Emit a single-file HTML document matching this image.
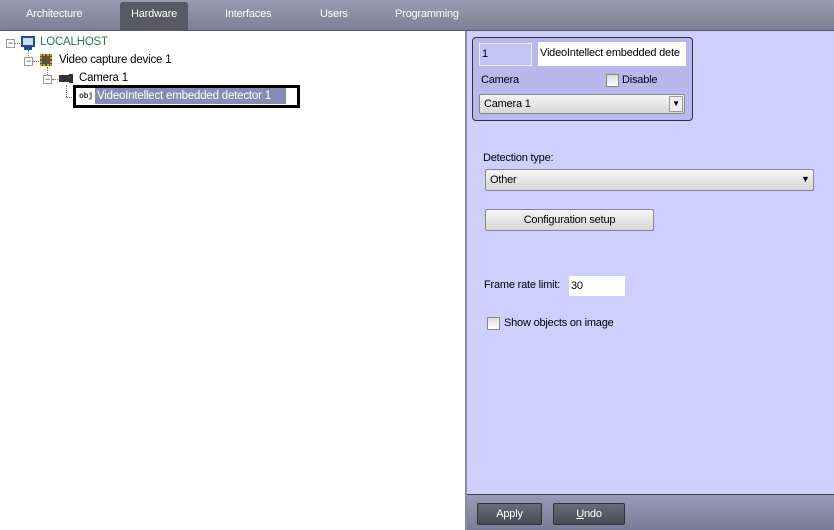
<!DOCTYPE html><html><head><style>
*{margin:0;padding:0;box-sizing:border-box}
body{width:834px;height:530px;position:relative;overflow:hidden;font-family:"Liberation Sans",sans-serif;font-size:11px;letter-spacing:-0.2px;background:#fff}
.a{position:absolute}
.top{left:0;top:0;width:834px;height:31px;background:linear-gradient(#9a9ab0,#7e7e96);border-bottom:1px solid #55556a}
.tab{top:8px;color:#fff;font-size:11px}
.left{left:0;top:31px;width:467px;height:499px;background:#fff;border-right:2px solid #8a8a9a}
.right{left:467px;top:31px;width:367px;height:463px;background:#cfcffd}
.bot{left:467px;top:494px;width:367px;height:36px;background:linear-gradient(#9a9ab8,#7c7c98);border-top:1px solid #444}
.btn{height:22px;background:linear-gradient(#f4f4f4,#d8d8d8);border:1px solid #888;border-radius:2px;text-align:center;line-height:20px}
.dbtn{top:8px;height:22px;background:linear-gradient(#6a6a78,#4a4a56);border:1px solid #333;border-radius:2px;color:#fff;text-align:center;line-height:20px}
.cb{width:13px;height:13px;background:linear-gradient(#ddd,#fff);border:1px solid #888}
.dot{border-left:1px dotted #777}
.doth{border-top:1px dotted #777}
.pm{width:9px;height:9px;border:1px solid #999;background:#fff;font-size:9px;line-height:6px;text-align:center;color:#333}
.tr{font-size:11.5px}
</style></head><body>
<div class="a top"></div>
<div class="a" style="left:120px;top:2px;width:68px;height:29px;background:#595966;border-radius:3px 3px 0 0"></div>
<div class="a tab" style="left:26px">Architecture</div>
<div class="a tab" style="left:131px">Hardware</div>
<div class="a tab" style="left:225px">Interfaces</div>
<div class="a tab" style="left:320px">Users</div>
<div class="a tab" style="left:395px">Programming</div>
<div class="a left"></div>
<div class="a pm" style="left:6px;top:39px">−</div>
<div class="a doth" style="left:15px;top:43px;width:5px"></div>
<div class="a" style="left:21px;top:36px;width:14px;height:11px;background:#cde;border:2px solid #2a4a8a"></div>
<div class="a" style="left:24px;top:47px;width:8px;height:3px;background:#2a4a8a"></div>
<div class="a tr" style="left:40px;top:36px;color:#2a7a4a">LOCALHOST</div>
<div class="a dot" style="left:28px;top:50px;height:8px"></div>
<div class="a pm" style="left:24px;top:57px">−</div>
<div class="a doth" style="left:33px;top:61px;width:6px"></div>
<div class="a" style="left:40px;top:54px;width:12px;height:12px;background:#554;border:2px dotted #d90"></div>
<div class="a tr" style="left:59px;top:54px;color:#000">Video capture device 1</div>
<div class="a dot" style="left:47px;top:67px;height:8px"></div>
<div class="a pm" style="left:43px;top:75px">−</div>
<div class="a doth" style="left:52px;top:79px;width:6px"></div>
<div class="a" style="left:59px;top:75px;width:10px;height:7px;background:#333"></div>
<div class="a" style="left:69px;top:74px;width:4px;height:9px;background:#333"></div>
<div class="a tr" style="left:79px;top:72px;color:#000">Camera 1</div>
<div class="a dot" style="left:66px;top:85px;height:12px"></div>
<div class="a doth" style="left:66px;top:97px;width:10px"></div>
<div class="a" style="left:73px;top:85px;width:227px;height:23px;border:3px solid #000"></div>
<div class="a" style="left:79px;top:92px;font-size:8px;color:#334;font-family:'Liberation Mono',monospace;font-weight:bold">obj</div>
<div class="a tr" style="left:95px;top:88px;width:191px;height:16px;background:#8a8ab4;color:#fff;padding-left:2px;line-height:16px;white-space:nowrap">VideoIntellect embedded detector 1</div>
<div class="a right"></div>
<div class="a" style="left:472px;top:37px;width:221px;height:84px;background:#b8b8ec;border:1px solid #333;border-radius:4px"></div>
<div class="a" style="left:479px;top:43px;width:53px;height:23px;border:1px solid #eef;background:#c4c4f4;padding:4px 2px">1</div>
<div class="a" style="left:538px;top:42px;width:148px;height:24px;background:#fff;padding:5px 2px;white-space:nowrap;overflow:hidden">VideoIntellect embedded dete</div>
<div class="a" style="left:481px;top:74px">Camera</div>
<div class="a cb" style="left:606px;top:74px"></div>
<div class="a" style="left:622px;top:74px">Disable</div>
<div class="a btn" style="left:479px;top:94px;width:206px;height:20px;text-align:left;padding-left:4px;line-height:18px">Camera 1</div>
<div class="a" style="left:669px;top:96px;width:14px;height:16px;background:#eee;border:1px solid #999;font-size:8px;text-align:center;line-height:14px">▼</div>
<div class="a" style="left:483px;top:152px">Detection type:</div>
<div class="a btn" style="left:485px;top:169px;width:329px;text-align:left;padding-left:4px">Other</div>
<div class="a" style="left:801px;top:174px;font-size:9px">▼</div>
<div class="a btn" style="left:485px;top:209px;width:169px">Configuration setup</div>
<div class="a" style="left:484px;top:279px">Frame rate limit:</div>
<div class="a" style="left:569px;top:276px;width:56px;height:20px;background:#fff;padding:4px 2px">30</div>
<div class="a cb" style="left:487px;top:317px"></div>
<div class="a" style="left:504px;top:317px">Show objects on image</div>
<div class="a bot"></div>
<div class="a dbtn" style="left:477px;top:503px;width:65px">Apply</div>
<div class="a dbtn" style="left:553px;top:503px;width:72px"><u>U</u>ndo</div>
</body></html>
